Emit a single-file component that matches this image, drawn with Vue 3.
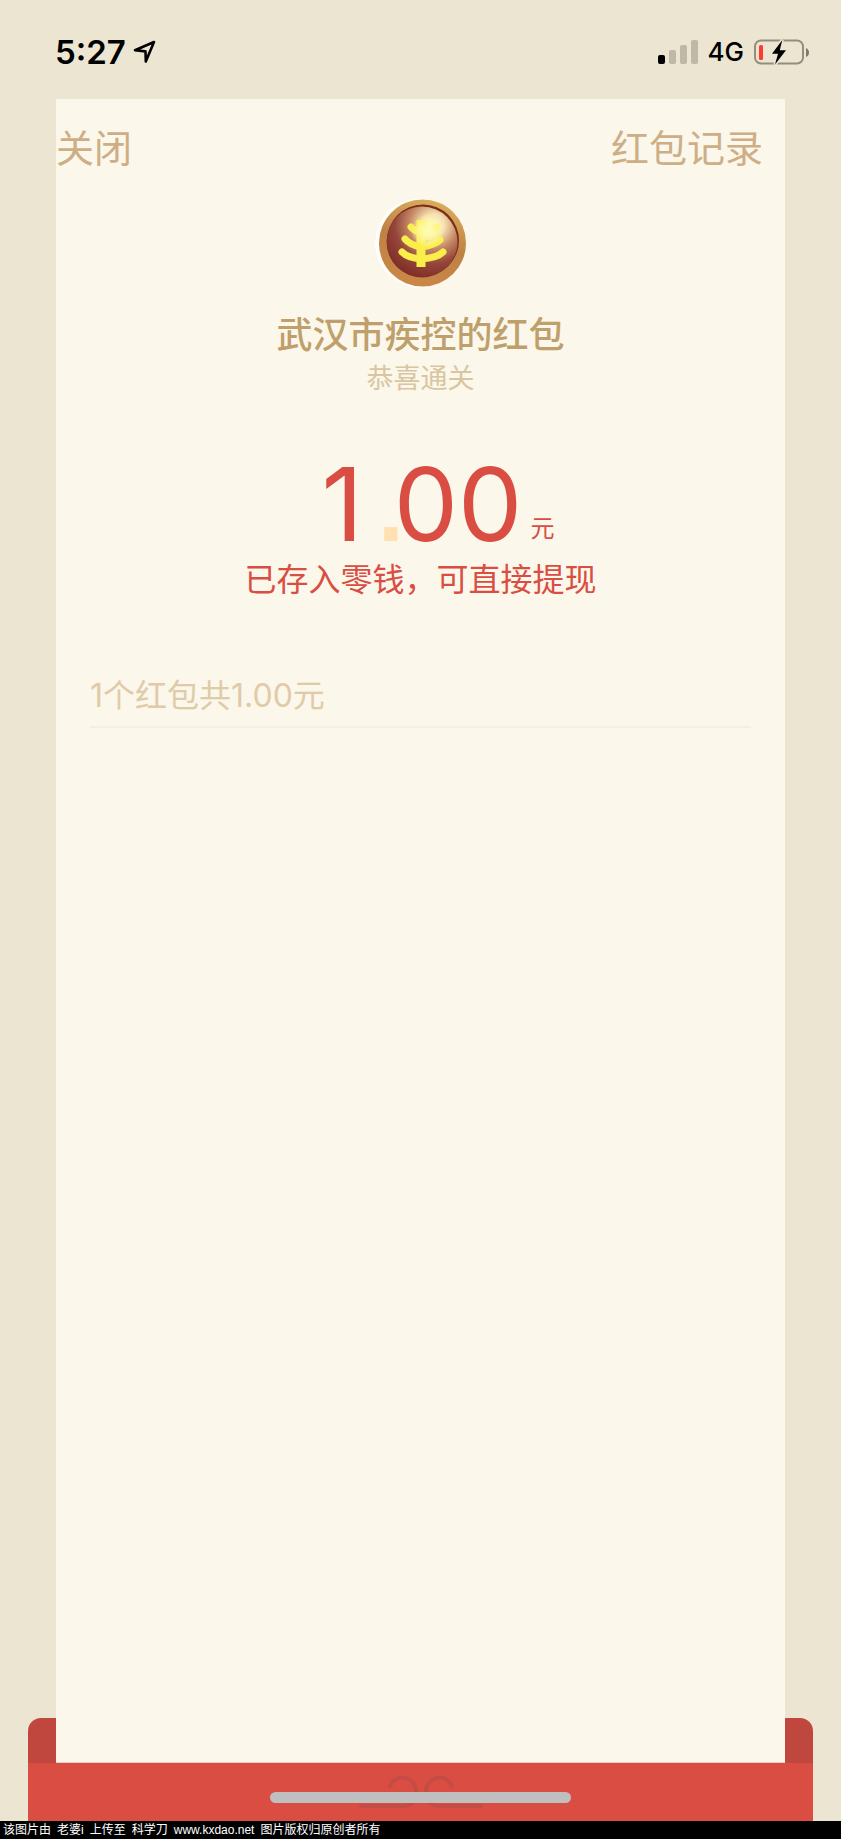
<template>
  <div class="page">
    <header class="status">
      <div class="status-left">
        <time class="clock">5:27</time>
        <svg class="location" viewBox="0 0 24 24" aria-hidden="true">
          <path d="M2 10.2 21 2 12.8 21.500 12.500 11.400Z" />
        </svg>
      </div>
      <div class="status-right">
        <div class="signal">
          <i v-for="n in 4" :key="n" :class="['bar', 'bar-' + n, { on: n <= signal }]"></i>
        </div>
        <span class="network">4G</span>
        <svg class="battery" viewBox="0 0 56 28" aria-hidden="true">
          <rect class="shell" x="1" y="2.500" width="48" height="23" rx="6" />
          <path class="tip" d="M52 10q3 1.500 3 4.500t-3 4.500z" />
          <rect class="level" x="5" y="7" width="4" height="15" rx="1.500" />
          <path class="bolt" d="M28.300 2 18 15.700h6L21 26.500 32 12.300h-6.200z" />
        </svg>
      </div>
    </header>

    <div class="stage">
      <span class="flap flap-left"></span>
      <main class="card">
        <nav class="nav">
          <button type="button">关闭</button>
          <button type="button">红包记录</button>
        </nav>

        <svg class="avatar" viewBox="0 0 92 92" aria-hidden="true">
          <defs>
            <linearGradient id="rim" x1="0.7" y1="0" x2="0.4" y2="1">
              <stop offset="0" stop-color="#dcae5c" />
              <stop offset="0.5" stop-color="#c08146" />
              <stop offset="1" stop-color="#c98845" />
            </linearGradient>
            <radialGradient id="face" cx="0.66" cy="0.26" r="0.8">
              <stop offset="0" stop-color="#fffad8" />
              <stop offset="0.2" stop-color="#f5dfae" />
              <stop offset="0.42" stop-color="#c58a66" />
              <stop offset="0.68" stop-color="#95453a" />
              <stop offset="1" stop-color="#7d2c26" />
            </radialGradient>
            <radialGradient id="glow">
              <stop offset="0" stop-color="#fffcc0" />
              <stop offset="0.5" stop-color="#fffaa0" stop-opacity="0.8" />
              <stop offset="1" stop-color="#fff7a0" stop-opacity="0" />
            </radialGradient>
          </defs>
          <circle cx="44.500" cy="46" r="44.500" fill="#fffefa" />
          <circle cx="47.500" cy="46" r="43.5" fill="url(#rim)" />
          <circle cx="48" cy="43.500" r="36" fill="#7a2d1c" />
          <circle cx="47" cy="45" r="35.500" fill="url(#face)" />
          <g class="tree">
            <path class="trunk" d="M46 23v47" />
            <path d="M36 30q3 4 10 6" />
            <path d="M61 30q-5 5-15 7" />
            <path d="M30 42q5 6 16 8" />
            <path d="M65 43q-5 5-19 7" />
            <path d="M27 55q6 6 19 7" />
            <path d="M68 55q-6 6-22 7" />
          </g>
          <circle cx="53" cy="34" r="17" fill="url(#glow)" />
        </svg>

        <h1 class="sender">武汉市疾控的红包</h1>
        <p class="wish">恭喜通关</p>

        <p class="amount">
          <span>1</span><span class="dot">.</span><span>00</span><small>元</small>
        </p>
        <p class="saved">已存入零钱，可直接提现</p>

        <p class="summary">1个红包共1.00元</p>
      </main>
      <span class="flap flap-right"></span>
    </div>

    <div class="envelope">
      <svg class="emblem" viewBox="0 0 130 37" aria-hidden="true">
        <path d="M34 14A13.500 13.500 0 0 1 60 19Q60 34 46 34H5" />
        <path d="M96 14A13.500 13.500 0 0 0 70 19Q70 34 84 34H125" />
      </svg>
      <span class="home-bar"></span>
    </div>

    <footer class="credit">
      <span v-for="part in credit" :key="part">{{ part }}</span>
    </footer>
  </div>
</template>

<script setup>
import { ref } from 'vue'

const signal = ref(1)
const credit = ['该图片由', '老婆i', '上传至', '科学刀', 'www.kxdao.net', '图片版权归原创者所有']
</script>

<style>
body {
  margin: 0;
  background: #ece5d2;
}
</style>

<style scoped>
.page {
  display: flex;
  flex-direction: column;
  min-height: 100vh;
  background: #ece5d2;
  font-family: Inter, "Noto Sans CJK SC", sans-serif;
}

.page p,
.page h1 {
  margin: 0;
}

/* status bar */
.status {
  display: flex;
  justify-content: space-between;
  align-items: center;
  box-sizing: border-box;
  height: 99px;
  padding: 4px 31px 0 55px;
  color: #000;
}

.status-left,
.status-right {
  display: flex;
  align-items: center;
}

.status-left {
  gap: 7px;
}

.status-right {
  gap: 10px;
}

.clock {
  font-size: 33px;
  font-weight: 600;
  line-height: 40px;
}

.location {
  width: 24px;
  height: 24px;
  fill: none;
  stroke: #000;
  stroke-width: 2.6;
  stroke-linejoin: round;
}

.signal {
  display: flex;
  align-items: flex-end;
  gap: 4px;
}

.bar {
  width: 7px;
  border-radius: 2px;
  background: #bfb8a9;
}

.bar.on {
  background: #000;
}

.bar-1 { height: 9px; }
.bar-2 { height: 14px; }
.bar-3 { height: 19px; }
.bar-4 { height: 24px; }

.network {
  font-size: 26px;
  font-weight: 500;
  line-height: 32px;
}

.battery {
  width: 56px;
  height: 28px;
}

.shell {
  fill: none;
  stroke: #938e80;
  stroke-width: 2;
}

.tip { fill: #7d796e; }
.level { fill: #ff3b30; }

.bolt {
  fill: #000;
  stroke: #ece5d2;
  stroke-width: 3;
  paint-order: stroke;
}

/* card with the envelope flaps at its sides */
.stage {
  display: flex;
  flex: 1;
  padding: 0 28px;
}

.flap {
  flex: none;
  align-self: flex-end;
  width: 28px;
  height: 45px;
  background: #bf473d;
}

.flap-left { border-top-left-radius: 13px; }
.flap-right { border-top-right-radius: 13px; }

.card {
  display: flex;
  flex: 1;
  flex-direction: column;
  align-items: center;
  border-bottom: 1px solid #eccfc3;
  background: #fbf7ea;
}

.nav {
  display: flex;
  justify-content: space-between;
  align-self: stretch;
  padding: 21px 22px 0 0;
}

.nav button {
  padding: 0;
  border: 0;
  background: none;
  color: #cdae86;
  font-family: inherit;
  font-size: 38px;
  line-height: 56px;
  cursor: pointer;
}

.avatar {
  width: 92px;
  height: 92px;
  margin-top: 21px;
}

.tree path {
  fill: none;
  stroke: #f9ee4a;
  stroke-width: 7;
  stroke-linecap: round;
}

.tree .trunk {
  stroke-width: 9;
  stroke-linecap: butt;
}

.page .sender {
  margin-top: 20px;
  color: #bf9f6b;
  font-size: 36px;
  font-weight: 500;
  line-height: 52px;
}

.wish {
  color: #d9c5a0;
  font-size: 27px;
  line-height: 36px;
}

.page .amount {
  display: flex;
  align-items: baseline;
  margin-top: 59px;
  padding-left: 35px;
  color: #da4d43;
  font-size: 102px;
  line-height: 96px;
}

.amount .dot {
  margin: 0 -10px 0 15px;
  color: #ffe0b0;
  font-family: "Liberation Sans", sans-serif;
  font-weight: 700;
  font-size: 92px;
  line-height: 80px;
}

.amount small {
  align-self: flex-end;
  margin: 0 0 11px 8px;
  font-size: 24px;
  line-height: 24px;
}

.page .saved {
  margin-top: 6px;
  color: #da4d43;
  font-size: 32px;
  line-height: 44px;
}

.page .summary {
  align-self: stretch;
  margin: 72px 34px 0;
  padding-bottom: 8px;
  border-bottom: 2px solid #f4efe2;
  color: #e0cba9;
  font-size: 32px;
  line-height: 44px;
}

/* envelope bottom */
.envelope {
  display: flex;
  flex-direction: column;
  align-items: center;
  height: 58px;
  margin: 0 28px;
  background: #da4d43;
}

.emblem {
  width: 130px;
  height: 37px;
  margin-top: 9px;
  fill: none;
  stroke: #c54c44;
  stroke-width: 4;
  stroke-linecap: round;
}

.home-bar {
  position: relative;
  width: 301px;
  height: 11px;
  margin-top: -17px;
  border-radius: 6px;
  background: #bfbfbf;
}

.credit {
  display: flex;
  gap: 6px;
  padding: 0 3px;
  background: #000;
  color: #fff;
  font-family: "Liberation Sans", "Noto Sans CJK SC", sans-serif;
  font-size: 12px;
  line-height: 18px;
  white-space: nowrap;
}
</style>
